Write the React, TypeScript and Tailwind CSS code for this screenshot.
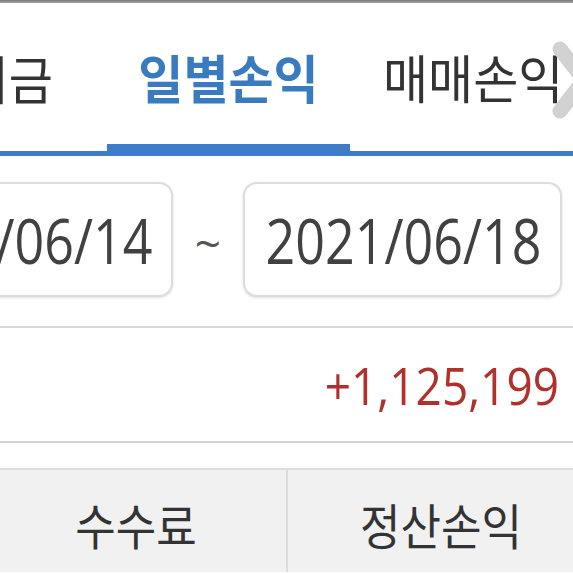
import React from "react";

const kr = "font-['Noto_Sans_CJK_KR','Noto_Sans',sans-serif]";
const num = "font-['Open_Sans','Noto_Sans',sans-serif]";

const Chevron = () => (
  <svg className="absolute right-0 top-[38px]" width="21" height="78" viewBox="0 0 21 78">
    <path d="M8 8 L32 39 L8 70" fill="none" stroke="#d2d2d2" strokeWidth="15" strokeLinecap="round" strokeLinejoin="round" />
  </svg>
);

const DateBox = ({ value, className = "" }: { value: string; className?: string }) => (
  <div
    className={`w-[319px] h-[115px] shrink-0 flex items-center justify-center rounded-[14px] border-2 border-[#dcdcdc] bg-white shadow-[0_1px_3px_rgba(0,0,0,0.12)] ${className}`}
  >
    <span className={`${num} inline-block scale-y-[1.18] text-[52px] leading-none text-[#414141] pl-[2px]`}>{value}</span>
  </div>
);

export default function App() {
  return (
    <div className={`w-[573px] h-[573px] overflow-hidden bg-white relative ${kr}`}>
      <div className="h-[3px] bg-gradient-to-b from-[#7a7a7a] to-[#a5a5a5]" />

      {/* tabs */}
      <div className="relative">
        <div className="flex h-[148px] items-stretch">
          <div className="w-[200px] ml-[-93px] shrink-0 flex items-center justify-end pr-[54px] text-[48px] text-[#333]">
            <span className="inline-block scale-y-[1.08]">예치금</span>
          </div>
          <div className="w-[243px] shrink-0 flex items-center justify-center border-b-[7px] border-[#3d7cc8] pt-[7px] text-[49px] font-bold text-[#3a7bc0]">
            <span className="inline-block scale-y-[1.06]">일별손익</span>
          </div>
          <div className="shrink-0 flex items-center pl-[33px] text-[49px] text-[#333] whitespace-nowrap">
            <span className="inline-block scale-y-[1.07]">매매손익</span>
          </div>
        </div>
        <div className="h-[5px] bg-[#3d7cc8]" />
        <Chevron />
      </div>

      {/* dates */}
      <div className="pt-[26px] flex items-center">
        <DateBox value="2021/06/14" className="ml-[-146px]" />
        <div className={`${num} w-[70px] shrink-0 text-center text-[46px] text-[#555] leading-none pt-[4px]`}>~</div>
        <DateBox value="2021/06/18" />
      </div>

      <div className="mt-[29px] h-[2px] bg-[#d8d8d8]" />
      <div className="h-[113px] flex items-center justify-end pr-[14px]">
        <span className={`${num} inline-block scale-y-[1.1] text-[46px] leading-none text-[#b1302b]`}>+1,125,199</span>
      </div>
      <div className="h-[2px] bg-[#d2d2d2]" />
      <div className="h-[25px]" />
      <div className="h-[2px] bg-[#dedede]" />

      {/* bottom buttons */}
      <div className="grid grid-cols-[288px_1fr] h-[102px] bg-[#f1f1f1]">
        <div className="flex items-center justify-center pr-[14px] pt-[6px] border-r-2 border-[#dcdcdc] text-[44px] text-[#333]">
          <span className="inline-block scale-y-[1.1]">수수료</span>
        </div>
        <div className="flex items-center justify-center pl-[21px] pt-[6px] text-[44px] text-[#333]">
          <span className="inline-block scale-y-[1.1]">정산손익</span>
        </div>
      </div>
    </div>
  );
}
